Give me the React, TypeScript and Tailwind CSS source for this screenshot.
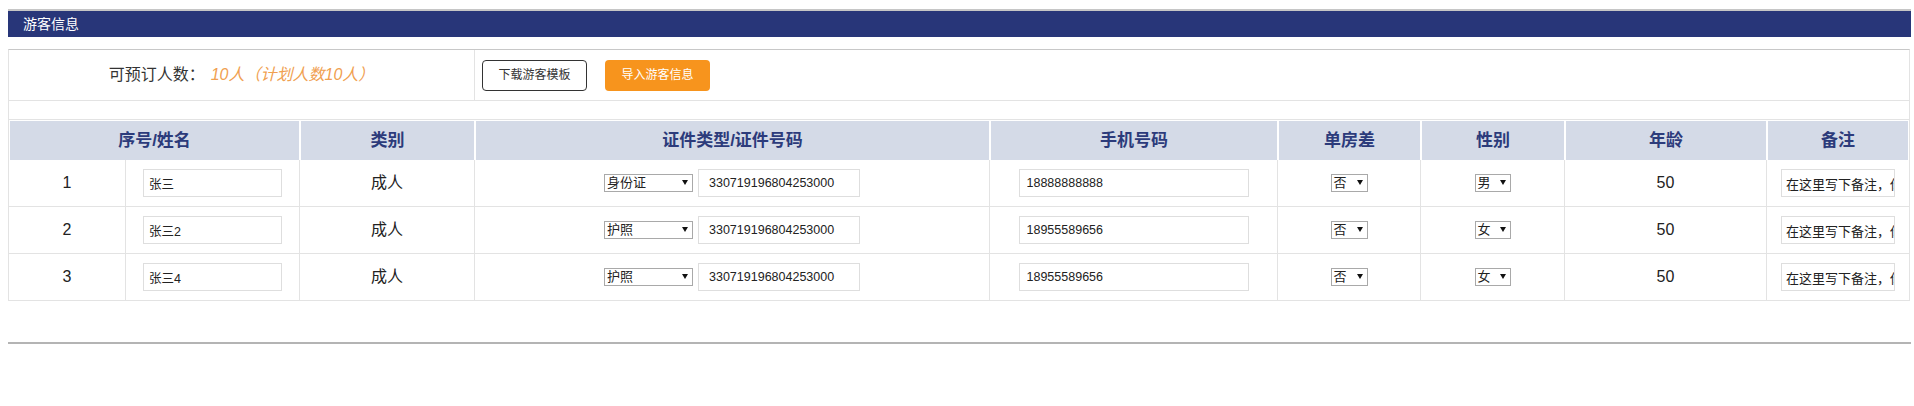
import React from 'react';

// --- data ---
type Guest = {
  no: number;
  name: string;
  kind: string;
  idType: string;
  idNo: string;
  phone: string;
  single: string;
  sex: string;
  age: number;
};

const guests: Guest[] = [
  { no: 1, name: '张三', kind: '成人', idType: '身份证', idNo: '330719196804253000', phone: '18888888888', single: '否', sex: '男', age: 50 },
  { no: 2, name: '张三2', kind: '成人', idType: '护照', idNo: '330719196804253000', phone: '18955589656', single: '否', sex: '女', age: 50 },
  { no: 3, name: '张三4', kind: '成人', idType: '护照', idNo: '330719196804253000', phone: '18955589656', single: '否', sex: '女', age: 50 },
];

const FONT = "font-['Liberation_Sans','Noto_Sans_CJK_SC',sans-serif]";

// --- small pieces ---
const Arrow = () => (
  <svg width="6" height="5" viewBox="0 0 6 5" className="absolute right-[4px] top-[5px]">
    <path d="M0 0 L6 0 L3 5 Z" fill="#111" />
  </svg>
);

// old-style select box, native arrow replaced with a small triangle
const SelectBox = ({ value, className }: { value: string; className: string }) => (
  <div className={`relative h-[18px] border border-[#a9a9a9] bg-white ${className}`}>
    <span className="block pl-[2px] text-[13px] leading-[16px] text-[#222]">{value}</span>
    <Arrow />
  </div>
);

const TextBox = ({ value, className }: { value: string; className: string }) => (
  <input
    readOnly
    defaultValue={value}
    className={`h-[28px] border border-[#dedede] bg-white text-[12.5px] text-[#222] outline-none ${className}`}
  />
);

const Th = ({ children, colSpan }: { children: React.ReactNode; colSpan?: number }) => (
  <th colSpan={colSpan} className="border-x border-t border-white p-0">
    <div className="flex h-[39px] items-center justify-center bg-[#d4dae7] text-[17px] font-bold text-[#2c3b7b]">
      {children}
    </div>
  </th>
);

const Td = ({ children, last }: { children: React.ReactNode; last?: boolean }) => (
  <td className={`border-b border-[#e3e3e3] p-0 ${last ? '' : 'border-r'}`}>
    <div className="flex h-[46px] items-center justify-center text-[16px] text-[#222]">{children}</div>
  </td>
);

export default function App() {
  return (
    <div className={`min-h-[406px] bg-white pt-[9px] ${FONT}`}>
      <div className="ml-[8px] w-[1903px]">
        {/* title bar */}
        <div className="flex h-[28px] items-center border-t-2 border-[#c6c6c6] bg-[#283679] pl-[15px]">
          <span className="text-[14px] text-white">游客信息</span>
        </div>

        {/* guest box */}
        <div className="mt-[12px] w-[1902px] border-x border-t border-x-[#e3e3e3] border-t-[#c8c8c8]">
          {/* summary row */}
          <div className="flex h-[51px] border-b border-[#e3e3e3]">
            <div className="flex w-[466px] items-center justify-center border-r border-[#e3e3e3] text-[16px]">
              <span className="text-[#333]">可预订人数：</span>
              <span className="ml-[6px] italic text-[#f0a050]">10人（计划人数10人）</span>
            </div>
            <div className="flex items-center gap-[18px] pl-[7px]">
              <button className="h-[31px] w-[105px] rounded-[4px] border border-[#333] bg-white text-[12px] text-[#333]">
                下载游客模板
              </button>
              <button className="h-[31px] w-[105px] rounded-[4px] bg-[#f7941d] text-[12px] text-white">
                导入游客信息
              </button>
            </div>
          </div>
          <div className="h-[19px] border-b border-[#e3e3e3]" />

          {/* guest table */}
          <table className="w-full table-fixed border-separate border-spacing-0">
            <colgroup>
              <col className="w-[117px]" />
              <col className="w-[174px]" />
              <col className="w-[175px]" />
              <col className="w-[515px]" />
              <col className="w-[288px]" />
              <col className="w-[143px]" />
              <col className="w-[144px]" />
              <col className="w-[202px]" />
              <col className="w-[142px]" />
            </colgroup>
            <thead>
              <tr>
                <Th colSpan={2}>序号/姓名</Th>
                <Th>类别</Th>
                <Th>证件类型/证件号码</Th>
                <Th>手机号码</Th>
                <Th>单房差</Th>
                <Th>性别</Th>
                <Th>年龄</Th>
                <Th>备注</Th>
              </tr>
            </thead>
            <tbody>
              {guests.map((g) => (
                <tr key={g.no}>
                  <Td>{g.no}</Td>
                  <Td>
                    <TextBox value={g.name} className="w-[139px] pl-[5px]" />
                  </Td>
                  <Td>{g.kind}</Td>
                  <Td>
                    <div className="flex items-center gap-[5px]">
                      <SelectBox value={g.idType} className="w-[89px]" />
                      <TextBox value={g.idNo} className="w-[162px] pl-[10px]" />
                    </div>
                  </Td>
                  <Td>
                    <TextBox value={g.phone} className="w-[230px] pl-[7px]" />
                  </Td>
                  <Td>
                    <SelectBox value={g.single} className="w-[37px]" />
                  </Td>
                  <Td>
                    <SelectBox value={g.sex} className="w-[36px]" />
                  </Td>
                  <Td>{g.age}</Td>
                  <Td last>
                    <TextBox value="在这里写下备注，你可以填写特殊需求" className="w-[114px] pl-[4px] text-[13px]" />
                  </Td>
                </tr>
              ))}
            </tbody>
          </table>
        </div>

        {/* bottom rule */}
        <div className="mt-[41px] h-[2px] bg-[#b4b4b4]" />
      </div>
    </div>
  );
}
